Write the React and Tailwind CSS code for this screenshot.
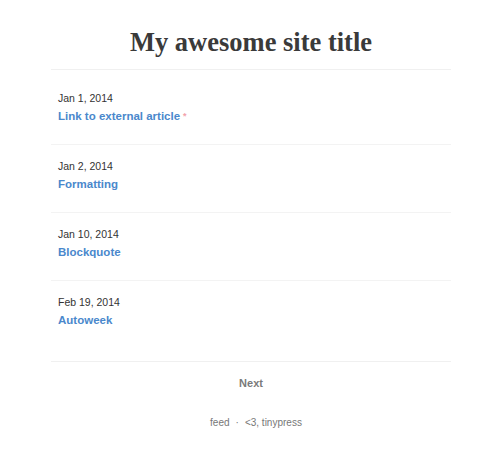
import React from 'react';

const posts = [
  { date: 'Jan 1, 2014', title: 'Link to external article', external: true },
  { date: 'Jan 2, 2014', title: 'Formatting' },
  { date: 'Jan 10, 2014', title: 'Blockquote' },
  { date: 'Feb 19, 2014', title: 'Autoweek' },
];

const sans = { fontFamily: '"Liberation Sans", Arial, sans-serif' };

export default function App() {
  return (
    <div className="min-h-[450px] bg-white" style={sans}>
      <div className="mx-auto w-[400px] translate-x-[1px]">
        <header className="border-b border-[#f0f0f0] pt-[26px] pb-[11px] text-center">
          <h1
            className="text-[26.5px] leading-[32px] font-bold text-[#3a3a3a]"
            style={{ fontFamily: '"Liberation Serif", "DejaVu Serif", serif' }}
          >
            My awesome site title
          </h1>
        </header>

        <ul className="pt-[7px] pb-[13px]">
          {posts.map((post, i) => (
            <li
              key={post.title}
              className={
                'px-[7px] pt-[13px] pb-[18px] ' +
                (i < posts.length - 1 ? 'border-b border-[#f3f3f3]' : '')
              }
            >
              <div className="text-[10.5px] leading-[16px] text-[#333]">{post.date}</div>
              <div className="text-[11.5px] leading-[20px] font-bold">
                <a href="#" className="text-[#4a88cc]">{post.title}</a>
                {post.external && (
                  <span className="ml-[3px] align-top text-[9px] text-[#f2a2ab]">*</span>
                )}
              </div>
            </li>
          ))}
        </ul>

        <nav className="border-t border-[#f0f0f0] pt-[8px] text-center">
          <a href="#" className="text-[11px] leading-[16px] font-bold text-[#7a7a7a]">
            Next
          </a>
        </nav>

        <footer className="pt-[22px] pl-[10px] text-center text-[10px] leading-[14px] text-[#777]">
          <a href="#">feed</a>
          <span className="mx-[6px]">·</span>
          <a href="#">&lt;3, tinypress</a>
        </footer>
      </div>
    </div>
  );
}
